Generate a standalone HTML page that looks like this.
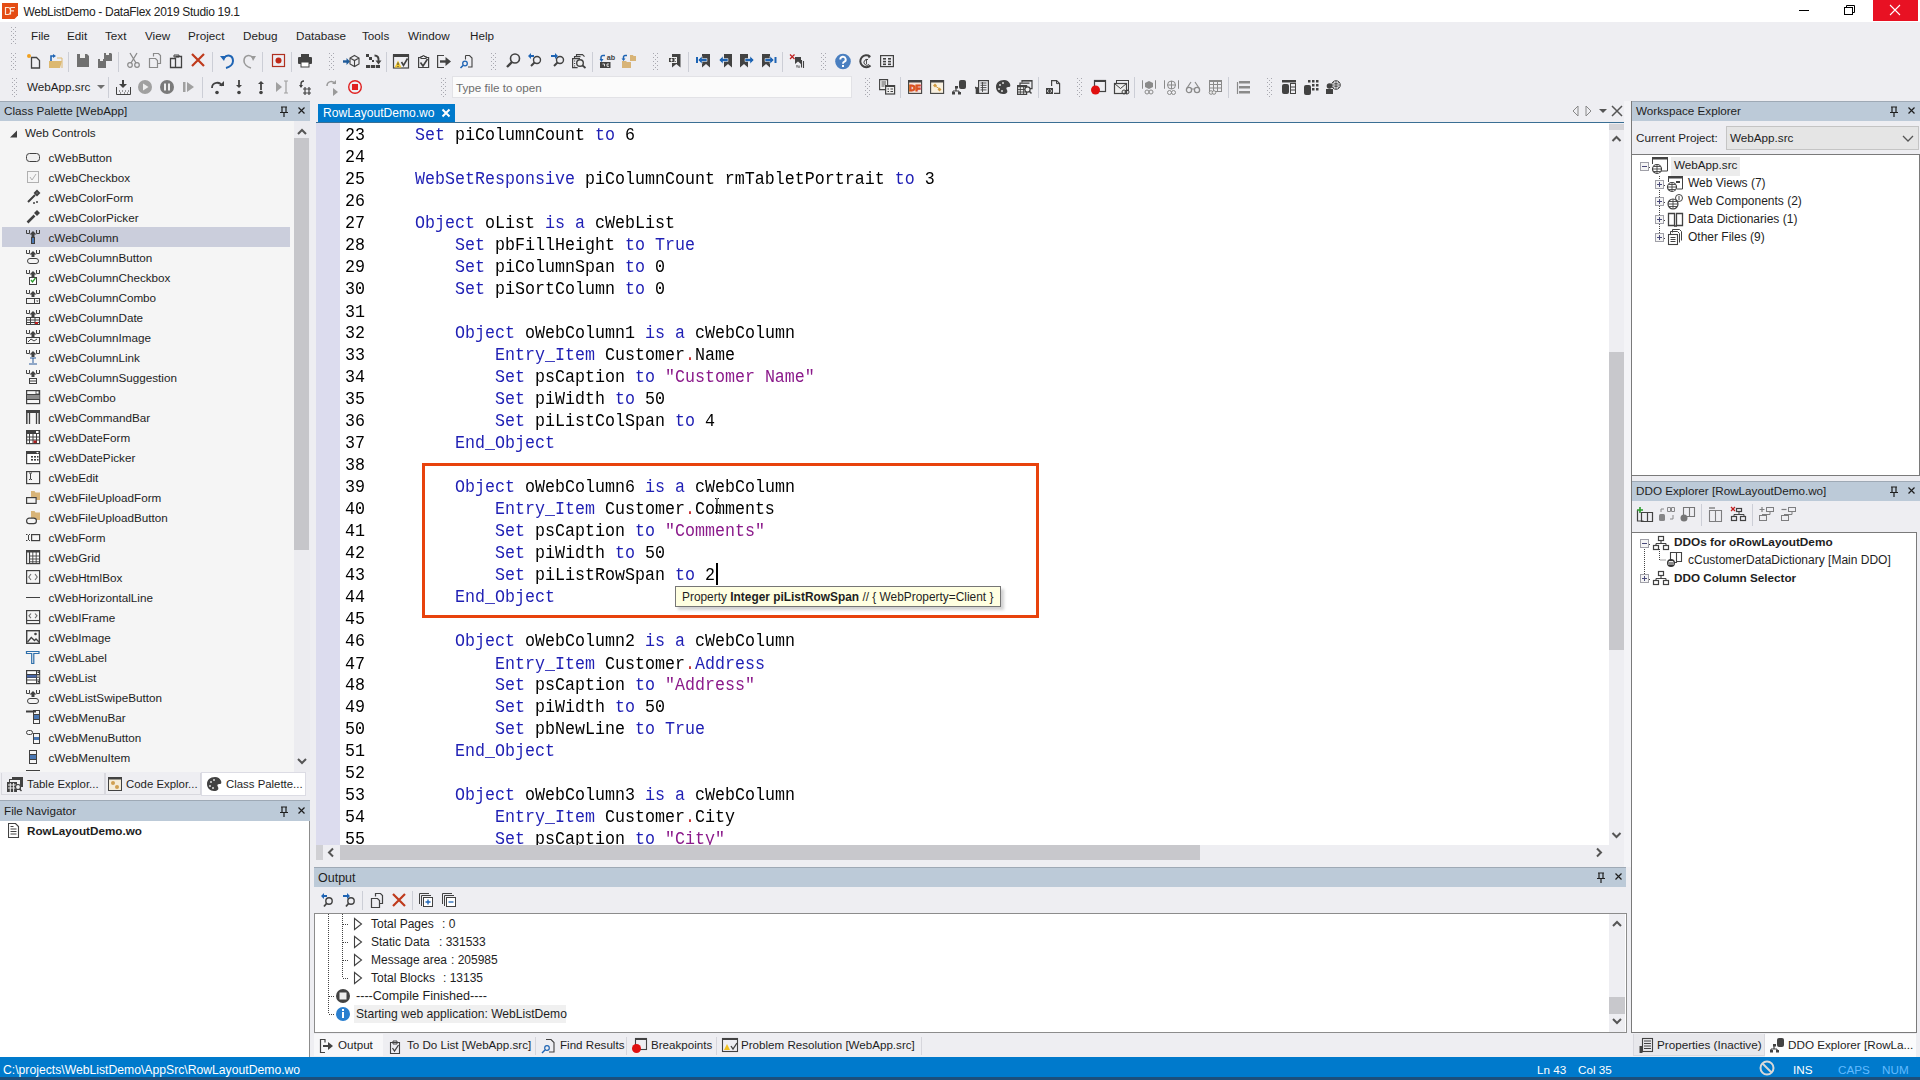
<!DOCTYPE html>
<html><head><meta charset="utf-8">
<style>
*{margin:0;padding:0;box-sizing:border-box}
html,body{width:1920px;height:1080px;overflow:hidden;background:#eeeef2;font-family:"Liberation Sans",sans-serif;font-size:11.7px;color:#1e1e1e;position:relative}
.a{position:absolute}
.t{position:absolute;white-space:pre;line-height:14px}
.hdr{position:absolute;background:#bccad8;border-top:1px solid #9ea9b5}
.code{position:absolute;font-family:"Liberation Mono",monospace;font-size:16.67px;white-space:pre;line-height:20.56px;color:#000;transform:scaleY(1.07);transform-origin:0 0}
.k{color:#1f1fb4}
.s{color:#8b1a8b}
.d{color:#c83232}
</style></head><body>

<!-- title bar -->
<div class="a" style="left:0;top:0;width:1920px;height:22px;background:#fff"></div>
<svg class="a" style="left:2px;top:3px" width="16" height="16"><path d="M0 0h16v12.5L12.5 16H0z" fill="#e44c14"/><path d="M3.5 4.5v7h2.5a2.5 3.5 0 0 0 0-7z M8.5 4.5h4.5M8.5 7.8h3.5M8.5 4.5v7" fill="none" stroke="#fbe8d8" stroke-width="1.2"/></svg>
<div class="t" style="left:23.5px;top:5px;font-size:12px;letter-spacing:-0.3px;color:#222">WebListDemo - DataFlex 2019 Studio 19.1</div>
<div class="a" style="left:1873px;top:0;width:45px;height:21px;background:#e81123"></div>

<!-- menu bar -->
<div class="t" style="left:31px;top:29px">File</div>
<div class="t" style="left:67px;top:29px">Edit</div>
<div class="t" style="left:105px;top:29px">Text</div>
<div class="t" style="left:145px;top:29px">View</div>
<div class="t" style="left:188px;top:29px">Project</div>
<div class="t" style="left:243px;top:29px">Debug</div>
<div class="t" style="left:296px;top:29px">Database</div>
<div class="t" style="left:362px;top:29px">Tools</div>
<div class="t" style="left:408px;top:29px">Window</div>
<div class="t" style="left:470px;top:29px">Help</div>

<!-- TOOLBARS -->
<svg class="a" style="left:0;top:0" width="1400" height="101"><rect x="11" y="53" width="1" height="1" fill="#a8a8b0"/><rect x="15" y="53" width="1" height="1" fill="#a8a8b0"/><rect x="13" y="55" width="1" height="1" fill="#a8a8b0"/><rect x="11" y="57" width="1" height="1" fill="#a8a8b0"/><rect x="15" y="57" width="1" height="1" fill="#a8a8b0"/><rect x="13" y="59" width="1" height="1" fill="#a8a8b0"/><rect x="11" y="61" width="1" height="1" fill="#a8a8b0"/><rect x="15" y="61" width="1" height="1" fill="#a8a8b0"/><rect x="13" y="63" width="1" height="1" fill="#a8a8b0"/><rect x="11" y="65" width="1" height="1" fill="#a8a8b0"/><rect x="15" y="65" width="1" height="1" fill="#a8a8b0"/><rect x="13" y="67" width="1" height="1" fill="#a8a8b0"/><rect x="11" y="69" width="1" height="1" fill="#a8a8b0"/><rect x="15" y="69" width="1" height="1" fill="#a8a8b0"/><rect x="329" y="53" width="1" height="1" fill="#a8a8b0"/><rect x="333" y="53" width="1" height="1" fill="#a8a8b0"/><rect x="331" y="55" width="1" height="1" fill="#a8a8b0"/><rect x="329" y="57" width="1" height="1" fill="#a8a8b0"/><rect x="333" y="57" width="1" height="1" fill="#a8a8b0"/><rect x="331" y="59" width="1" height="1" fill="#a8a8b0"/><rect x="329" y="61" width="1" height="1" fill="#a8a8b0"/><rect x="333" y="61" width="1" height="1" fill="#a8a8b0"/><rect x="331" y="63" width="1" height="1" fill="#a8a8b0"/><rect x="329" y="65" width="1" height="1" fill="#a8a8b0"/><rect x="333" y="65" width="1" height="1" fill="#a8a8b0"/><rect x="331" y="67" width="1" height="1" fill="#a8a8b0"/><rect x="329" y="69" width="1" height="1" fill="#a8a8b0"/><rect x="333" y="69" width="1" height="1" fill="#a8a8b0"/><rect x="491" y="53" width="1" height="1" fill="#a8a8b0"/><rect x="495" y="53" width="1" height="1" fill="#a8a8b0"/><rect x="493" y="55" width="1" height="1" fill="#a8a8b0"/><rect x="491" y="57" width="1" height="1" fill="#a8a8b0"/><rect x="495" y="57" width="1" height="1" fill="#a8a8b0"/><rect x="493" y="59" width="1" height="1" fill="#a8a8b0"/><rect x="491" y="61" width="1" height="1" fill="#a8a8b0"/><rect x="495" y="61" width="1" height="1" fill="#a8a8b0"/><rect x="493" y="63" width="1" height="1" fill="#a8a8b0"/><rect x="491" y="65" width="1" height="1" fill="#a8a8b0"/><rect x="495" y="65" width="1" height="1" fill="#a8a8b0"/><rect x="493" y="67" width="1" height="1" fill="#a8a8b0"/><rect x="491" y="69" width="1" height="1" fill="#a8a8b0"/><rect x="495" y="69" width="1" height="1" fill="#a8a8b0"/><rect x="653" y="53" width="1" height="1" fill="#a8a8b0"/><rect x="657" y="53" width="1" height="1" fill="#a8a8b0"/><rect x="655" y="55" width="1" height="1" fill="#a8a8b0"/><rect x="653" y="57" width="1" height="1" fill="#a8a8b0"/><rect x="657" y="57" width="1" height="1" fill="#a8a8b0"/><rect x="655" y="59" width="1" height="1" fill="#a8a8b0"/><rect x="653" y="61" width="1" height="1" fill="#a8a8b0"/><rect x="657" y="61" width="1" height="1" fill="#a8a8b0"/><rect x="655" y="63" width="1" height="1" fill="#a8a8b0"/><rect x="653" y="65" width="1" height="1" fill="#a8a8b0"/><rect x="657" y="65" width="1" height="1" fill="#a8a8b0"/><rect x="655" y="67" width="1" height="1" fill="#a8a8b0"/><rect x="653" y="69" width="1" height="1" fill="#a8a8b0"/><rect x="657" y="69" width="1" height="1" fill="#a8a8b0"/><rect x="821" y="53" width="1" height="1" fill="#a8a8b0"/><rect x="825" y="53" width="1" height="1" fill="#a8a8b0"/><rect x="823" y="55" width="1" height="1" fill="#a8a8b0"/><rect x="821" y="57" width="1" height="1" fill="#a8a8b0"/><rect x="825" y="57" width="1" height="1" fill="#a8a8b0"/><rect x="823" y="59" width="1" height="1" fill="#a8a8b0"/><rect x="821" y="61" width="1" height="1" fill="#a8a8b0"/><rect x="825" y="61" width="1" height="1" fill="#a8a8b0"/><rect x="823" y="63" width="1" height="1" fill="#a8a8b0"/><rect x="821" y="65" width="1" height="1" fill="#a8a8b0"/><rect x="825" y="65" width="1" height="1" fill="#a8a8b0"/><rect x="823" y="67" width="1" height="1" fill="#a8a8b0"/><rect x="821" y="69" width="1" height="1" fill="#a8a8b0"/><rect x="825" y="69" width="1" height="1" fill="#a8a8b0"/><rect x="11" y="27" width="1" height="1" fill="#a8a8b0"/><rect x="15" y="27" width="1" height="1" fill="#a8a8b0"/><rect x="13" y="29" width="1" height="1" fill="#a8a8b0"/><rect x="11" y="31" width="1" height="1" fill="#a8a8b0"/><rect x="15" y="31" width="1" height="1" fill="#a8a8b0"/><rect x="13" y="33" width="1" height="1" fill="#a8a8b0"/><rect x="11" y="35" width="1" height="1" fill="#a8a8b0"/><rect x="15" y="35" width="1" height="1" fill="#a8a8b0"/><rect x="13" y="37" width="1" height="1" fill="#a8a8b0"/><rect x="11" y="39" width="1" height="1" fill="#a8a8b0"/><rect x="15" y="39" width="1" height="1" fill="#a8a8b0"/><rect x="13" y="41" width="1" height="1" fill="#a8a8b0"/><rect x="11" y="43" width="1" height="1" fill="#a8a8b0"/><rect x="15" y="43" width="1" height="1" fill="#a8a8b0"/><rect x="68" y="52" width="1" height="20" fill="#ccced6"/><rect x="118" y="52" width="1" height="20" fill="#ccced6"/><rect x="212" y="52" width="1" height="20" fill="#ccced6"/><rect x="262" y="52" width="1" height="20" fill="#ccced6"/><rect x="291" y="52" width="1" height="20" fill="#ccced6"/><rect x="386" y="52" width="1" height="20" fill="#ccced6"/><rect x="592" y="52" width="1" height="20" fill="#ccced6"/><rect x="688" y="52" width="1" height="20" fill="#ccced6"/><rect x="782" y="52" width="1" height="20" fill="#ccced6"/><rect x="12" y="78" width="1" height="1" fill="#a8a8b0"/><rect x="16" y="78" width="1" height="1" fill="#a8a8b0"/><rect x="14" y="80" width="1" height="1" fill="#a8a8b0"/><rect x="12" y="82" width="1" height="1" fill="#a8a8b0"/><rect x="16" y="82" width="1" height="1" fill="#a8a8b0"/><rect x="14" y="84" width="1" height="1" fill="#a8a8b0"/><rect x="12" y="86" width="1" height="1" fill="#a8a8b0"/><rect x="16" y="86" width="1" height="1" fill="#a8a8b0"/><rect x="14" y="88" width="1" height="1" fill="#a8a8b0"/><rect x="12" y="90" width="1" height="1" fill="#a8a8b0"/><rect x="16" y="90" width="1" height="1" fill="#a8a8b0"/><rect x="14" y="92" width="1" height="1" fill="#a8a8b0"/><rect x="12" y="94" width="1" height="1" fill="#a8a8b0"/><rect x="16" y="94" width="1" height="1" fill="#a8a8b0"/><rect x="14" y="96" width="1" height="1" fill="#a8a8b0"/><rect x="441" y="78" width="1" height="1" fill="#a8a8b0"/><rect x="445" y="78" width="1" height="1" fill="#a8a8b0"/><rect x="443" y="80" width="1" height="1" fill="#a8a8b0"/><rect x="441" y="82" width="1" height="1" fill="#a8a8b0"/><rect x="445" y="82" width="1" height="1" fill="#a8a8b0"/><rect x="443" y="84" width="1" height="1" fill="#a8a8b0"/><rect x="441" y="86" width="1" height="1" fill="#a8a8b0"/><rect x="445" y="86" width="1" height="1" fill="#a8a8b0"/><rect x="443" y="88" width="1" height="1" fill="#a8a8b0"/><rect x="441" y="90" width="1" height="1" fill="#a8a8b0"/><rect x="445" y="90" width="1" height="1" fill="#a8a8b0"/><rect x="443" y="92" width="1" height="1" fill="#a8a8b0"/><rect x="441" y="94" width="1" height="1" fill="#a8a8b0"/><rect x="445" y="94" width="1" height="1" fill="#a8a8b0"/><rect x="443" y="96" width="1" height="1" fill="#a8a8b0"/><rect x="865" y="78" width="1" height="1" fill="#a8a8b0"/><rect x="869" y="78" width="1" height="1" fill="#a8a8b0"/><rect x="867" y="80" width="1" height="1" fill="#a8a8b0"/><rect x="865" y="82" width="1" height="1" fill="#a8a8b0"/><rect x="869" y="82" width="1" height="1" fill="#a8a8b0"/><rect x="867" y="84" width="1" height="1" fill="#a8a8b0"/><rect x="865" y="86" width="1" height="1" fill="#a8a8b0"/><rect x="869" y="86" width="1" height="1" fill="#a8a8b0"/><rect x="867" y="88" width="1" height="1" fill="#a8a8b0"/><rect x="865" y="90" width="1" height="1" fill="#a8a8b0"/><rect x="869" y="90" width="1" height="1" fill="#a8a8b0"/><rect x="867" y="92" width="1" height="1" fill="#a8a8b0"/><rect x="865" y="94" width="1" height="1" fill="#a8a8b0"/><rect x="869" y="94" width="1" height="1" fill="#a8a8b0"/><rect x="867" y="96" width="1" height="1" fill="#a8a8b0"/><rect x="1077" y="78" width="1" height="1" fill="#a8a8b0"/><rect x="1081" y="78" width="1" height="1" fill="#a8a8b0"/><rect x="1079" y="80" width="1" height="1" fill="#a8a8b0"/><rect x="1077" y="82" width="1" height="1" fill="#a8a8b0"/><rect x="1081" y="82" width="1" height="1" fill="#a8a8b0"/><rect x="1079" y="84" width="1" height="1" fill="#a8a8b0"/><rect x="1077" y="86" width="1" height="1" fill="#a8a8b0"/><rect x="1081" y="86" width="1" height="1" fill="#a8a8b0"/><rect x="1079" y="88" width="1" height="1" fill="#a8a8b0"/><rect x="1077" y="90" width="1" height="1" fill="#a8a8b0"/><rect x="1081" y="90" width="1" height="1" fill="#a8a8b0"/><rect x="1079" y="92" width="1" height="1" fill="#a8a8b0"/><rect x="1077" y="94" width="1" height="1" fill="#a8a8b0"/><rect x="1081" y="94" width="1" height="1" fill="#a8a8b0"/><rect x="1079" y="96" width="1" height="1" fill="#a8a8b0"/><rect x="1267" y="78" width="1" height="1" fill="#a8a8b0"/><rect x="1271" y="78" width="1" height="1" fill="#a8a8b0"/><rect x="1269" y="80" width="1" height="1" fill="#a8a8b0"/><rect x="1267" y="82" width="1" height="1" fill="#a8a8b0"/><rect x="1271" y="82" width="1" height="1" fill="#a8a8b0"/><rect x="1269" y="84" width="1" height="1" fill="#a8a8b0"/><rect x="1267" y="86" width="1" height="1" fill="#a8a8b0"/><rect x="1271" y="86" width="1" height="1" fill="#a8a8b0"/><rect x="1269" y="88" width="1" height="1" fill="#a8a8b0"/><rect x="1267" y="90" width="1" height="1" fill="#a8a8b0"/><rect x="1271" y="90" width="1" height="1" fill="#a8a8b0"/><rect x="1269" y="92" width="1" height="1" fill="#a8a8b0"/><rect x="1267" y="94" width="1" height="1" fill="#a8a8b0"/><rect x="1271" y="94" width="1" height="1" fill="#a8a8b0"/><rect x="1269" y="96" width="1" height="1" fill="#a8a8b0"/><rect x="108" y="77" width="1" height="21" fill="#ccced6"/><rect x="202" y="77" width="1" height="21" fill="#ccced6"/><rect x="900" y="77" width="1" height="21" fill="#ccced6"/><rect x="1038" y="77" width="1" height="21" fill="#ccced6"/><rect x="1134" y="77" width="1" height="21" fill="#ccced6"/><rect x="1228" y="77" width="1" height="21" fill="#ccced6"/><g transform="translate(26,53)"><path d="M5.5 4.5h5l3 3v7.5h-8z" fill="none" stroke="#424242" stroke-width="1.3"/><circle cx="3" cy="3" r="2" fill="#f0a020"/></g><g transform="translate(48,53)"><path d="M1 8h13l-2 7H1z" fill="#dcb870"/><path d="M3 8V3h3" stroke="#1e64b4" stroke-width="1.6" fill="none"/><path d="M5 1l3 2-3 2z" fill="#1e64b4"/><path d="M9 5h5v10" stroke="#dcb870" fill="none"/></g><g transform="translate(77,54)"><path d="M0 0h10l2 2v11H0z" fill="#707070"/><rect x="3" y="0" width="5" height="4" fill="#eee"/></g><g transform="translate(98,53)"><path d="M6 0h7l1 1v7H6z" fill="#707070"/><path d="M0 6h7l1 1v8H0z" fill="#707070"/><rect x="2" y="6" width="3" height="2" fill="#eee"/><rect x="8" y="0" width="3" height="2" fill="#eee"/></g><g transform="translate(127,53)"><path d="M3 0l6 10M10 0L4 10" stroke="#8a8a8a" stroke-width="1.3" fill="none"/><circle cx="3" cy="12" r="2.3" fill="none" stroke="#8a8a8a" stroke-width="1.2"/><circle cx="10" cy="12" r="2.3" fill="none" stroke="#8a8a8a" stroke-width="1.2"/></g><g transform="translate(149,53)"><path d="M4.5 3.5v-3h5l2 2v8h-3" fill="none" stroke="#8a8a8a" stroke-width="1.2"/><path d="M0.5 5.5h6l2 2v7h-8z" fill="none" stroke="#8a8a8a" stroke-width="1.2"/></g><g transform="translate(170,53)"><path d="M0.5 5.5h5v9h-5zM5.5 3.5h6v11h-6" fill="none" stroke="#424242" stroke-width="1.3"/><path d="M4 2h5v2H4z" fill="none" stroke="#424242"/></g><g transform="translate(191,53)"><path d="M1 1l12 12M13 1L1 13" stroke="#bf3a1c" stroke-width="2.2"/></g><g transform="translate(220,53)"><path d="M4 5c3-4 9-3 9 3 0 3-3 6-7 7" fill="none" stroke="#1e64b4" stroke-width="2"/><path d="M0 3l6 0-2 5z" fill="#1e64b4"/></g><g transform="translate(243,53)"><path d="M10 5c-3-4-9-3-9 3 0 3 3 6 7 7" fill="none" stroke="#9a9a9a" stroke-width="1.6"/><path d="M13 3h-5l2 5z" fill="#9a9a9a"/></g><g transform="translate(272,54)"><rect x="0.5" y="0.5" width="12" height="12" fill="none" stroke="#b03020" stroke-width="1.2"/><circle cx="6.5" cy="6.5" r="3" fill="#c02818"/></g><g transform="translate(298,54)"><rect x="3" y="0" width="8" height="3" fill="#424242"/><rect x="0" y="3" width="14" height="7" rx="1" fill="#424242"/><rect x="3" y="8" width="8" height="5" fill="#fff" stroke="#424242"/></g><g transform="translate(342,54)"><path d="M1 7.5h4" stroke="#1e5a9a" stroke-width="2.4"/><path d="M4.5 4l3.5 3.5-3.5 3.5z" fill="#1e5a9a"/><path d="M12.5 1.5l4.5 2.5v6l-4.5 2.5-4.5-2.5V4z M8 4l4.5 2.5L17 4M12.5 6.5v6" fill="none" stroke="#424242" stroke-width="1.1"/></g><g transform="translate(366,54)"><path d="M0 0h3v3H0zM3 3h3v3H3zM6 6h2v2H6z" fill="#424242"/><path d="M8.5 1.5c3 0 4.5 2 4 5.5" fill="none" stroke="#424242" stroke-width="2"/><path d="M9.5 6.5l3 4 3-4z" fill="#424242"/><rect x="0" y="11" width="14" height="3" fill="#424242"/><path d="M4.5 11v3M9.5 11v3" stroke="#eee" stroke-width="0.8"/></g><g transform="translate(393,54)"><rect x="0.5" y="1" width="15" height="13" fill="none" stroke="#424242" stroke-width="1.2"/><rect x="0" y="0" width="16" height="3" fill="#424242"/><path d="M1.5 13.5l3.5-7 3.5 7z" fill="#f0c830"/><path d="M5 8.5v2.5M5 12v1" stroke="#333" stroke-width="1"/><path d="M8.5 8l2 3.5 4-7" stroke="#424242" stroke-width="1.6" fill="none"/></g><g transform="translate(418,54)"><path d="M3 3.5H0.6v10h10v-10H8" fill="none" stroke="#424242" stroke-width="1.2"/><path d="M3 4.5V2.5h1.5a1 1 0 0 1 2 0H8v2z" fill="none" stroke="#424242" stroke-width="1.1"/><path d="M2.5 8.5l2.5 3.5 4.5-7" stroke="#424242" stroke-width="1.6" fill="none"/></g><g transform="translate(437,54)"><path d="M7 1.5H0.6v12H7" fill="none" stroke="#424242" stroke-width="1.2"/><path d="M3 7.5h6" stroke="#424242" stroke-width="2.4"/><path d="M8.5 3l5.5 4.5-5.5 4.5z" fill="#424242"/></g><g transform="translate(460,54)"><path d="M5.5 1.5h4l2.5 2.5v9H8" fill="none" stroke="#424242" stroke-width="1.1"/><path d="M5.5 1.5v4" stroke="#424242" stroke-width="1.1"/><circle cx="5" cy="9.5" r="2.3" fill="none" stroke="#1e64b4" stroke-width="1.3"/><path d="M3.3 11.2L0.5 14" stroke="#1e64b4" stroke-width="1.6"/></g><g transform="translate(506,53)"><circle cx="9" cy="5.5" r="4.5" fill="none" stroke="#424242" stroke-width="1.6"/><path d="M6 9l-5 5" stroke="#424242" stroke-width="2.4"/></g><g transform="translate(528,53)"><circle cx="9" cy="7" r="3.5" fill="none" stroke="#424242" stroke-width="1.4"/><path d="M6.5 9.5L3 13" stroke="#424242" stroke-width="2"/><path d="M0 3l3-3v2h3v2H3v2z" fill="#1e64b4"/></g><g transform="translate(551,53)"><circle cx="9" cy="7" r="3.5" fill="none" stroke="#424242" stroke-width="1.4"/><path d="M6.5 9.5L3 13" stroke="#424242" stroke-width="2"/><path d="M7 3L4 0v2H0v2h4v2z" fill="#1e64b4"/></g><g transform="translate(572,54)"><path d="M4.5 2.5V0.6h6l2 2" fill="none" stroke="#424242" stroke-width="1.1"/><path d="M2.5 4.5V2.6h6" fill="none" stroke="#424242" stroke-width="1.1"/><path d="M8 4.6H0.6v9h5" fill="none" stroke="#424242" stroke-width="1.2"/><path d="M2 7h1.2M2 9.5h1.2M2 12h1.2" stroke="#424242"/><circle cx="8" cy="9" r="3.3" fill="#eee" stroke="#424242" stroke-width="1.4"/><path d="M10.3 11.3L13.5 14" stroke="#424242" stroke-width="1.8"/></g><g transform="translate(600,54)"><path d="M5 1.5H3a2 2 0 0 0-2 2V6" fill="none" stroke="#1e64b4" stroke-width="1.5"/><path d="M-0.5 5l2 3 2-3z" fill="#1e64b4"/><text x="6.8" y="5.8" font-size="7.2" font-family="Liberation Sans" font-weight="bold" fill="#424242">ab</text><rect x="0" y="8" width="10.5" height="6" fill="#424242"/><path d="M2.5 10h2v2.3M7 10h2M7 10v2.3h2" stroke="#eee" stroke-width="0.9" fill="none"/></g><g transform="translate(622,54)"><path d="M8 1h3l.5 1H14v5H8z" fill="#d8b478"/><path d="M0 7h4l1 1h4v6H0z" fill="#d8b478"/><path d="M5 1.5H3a1.5 1.5 0 0 0-1.5 1.5V5" fill="none" stroke="#1e64b4" stroke-width="1.5"/><path d="M-0.5 4.5l2 2.5 2-2.5z" fill="#1e64b4"/></g><g transform="translate(668,54)"><path d="M4 0h8.5v13.5l-4.2-3.5-4.3 3.5z" fill="#424242"/><rect x="0.5" y="3.5" width="8" height="5" fill="#424242" stroke="#eee" stroke-width="1"/><path d="M2 6h3M3.5 4.5v3M6 5h1.5v2H6" stroke="#fff" stroke-width="0.9" fill="none"/></g><g transform="translate(696,54)"><path d="M6 0h8v13.5l-4-3.5-4 3.5z" fill="#424242"/><rect x="0" y="3" width="2" height="6" fill="#1e64b4"/><path d="M2 6l4-4v2.5h5v3H6V10z" fill="#1e64b4" stroke="#eee" stroke-width="0.6"/></g><g transform="translate(719,54)"><path d="M5 0h8v13.5l-4-3.5-4 3.5z" fill="#424242"/><path d="M0 6l4-4v2.5h5v3H4V10z" fill="#1e64b4" stroke="#eee" stroke-width="0.6"/></g><g transform="translate(740,54)"><path d="M0 0h8v13.5l-4-3.5-4 3.5z" fill="#424242"/><path d="M14 6l-4-4v2.5H5v3h5V10z" fill="#1e64b4" stroke="#eee" stroke-width="0.6"/></g><g transform="translate(762,54)"><path d="M0 0h8v13.5l-4-3.5-4 3.5z" fill="#424242"/><path d="M12 6l-4-4v2.5H3v3h5V10z" fill="#1e64b4" stroke="#eee" stroke-width="0.6"/><rect x="12.5" y="3" width="2" height="6" fill="#1e64b4"/></g><g transform="translate(789,54)"><path d="M1 0.5l4.5 4.5M5.5 0.5L1 5" stroke="#c02020" stroke-width="1.2"/><path d="M6 3h6v7l-3-2.5-3 2.5z" fill="#424242"/><path d="M12.5 6v7.5M14.5 7v7" stroke="#424242" stroke-width="1.1"/><path d="M8 11v2.5M10 11.5v2.5" stroke="#424242" stroke-width="1"/></g><g transform="translate(835,54)"><circle cx="8" cy="7.5" r="7.8" fill="#4a7fc0"/><path d="M5.3 5.5a2.7 2.7 0 1 1 3.8 2.4c-.9.4-1.1.9-1.1 1.8" fill="none" stroke="#fff" stroke-width="1.9"/><rect x="7" y="11" width="2" height="2" fill="#fff"/></g><g transform="translate(859,54)"><path d="M11 2.5a6 6 0 1 0 .5 9" fill="none" stroke="#424242" stroke-width="2"/><path d="M9 5.5a3 3 0 1 0 1 5" fill="none" stroke="#424242" stroke-width="1"/><path d="M6.5 6.5l1-0.8V10" stroke="#424242" stroke-width="0.9" fill="none"/><path d="M9 1l3 1.5-2.5 2z" fill="#424242"/></g><g transform="translate(880,55)"><rect x="0.6" y="0.6" width="12.8" height="11" fill="none" stroke="#424242" stroke-width="1.2"/><g fill="#424242"><rect x="3" y="3" width="3" height="1.6"/><rect x="8" y="3" width="3" height="1.6"/><rect x="3" y="5.8" width="3" height="1.6"/><rect x="8" y="5.8" width="3" height="1.6"/><rect x="3" y="8.5" width="3" height="1.6"/><rect x="8" y="8.5" width="3" height="1.6"/></g></g><g transform="translate(116,80)"><path d="M7 0v6" stroke="#424242" stroke-width="2"/><path d="M3 4l4 4 4-4z" fill="#424242"/><path d="M0.5 7v7.5h14V7" fill="none" stroke="#424242"/><path d="M3 11h1M6 11h1M9 11h1M12 11h1M4 13h1M8 13h1M11 13h1" stroke="#424242"/></g><g transform="translate(138,80)"><circle cx="7" cy="7" r="7" fill="#a0a0a0"/><path d="M5 3.5l5.5 3.5L5 10.5z" fill="#eee"/></g><g transform="translate(160,80)"><circle cx="7" cy="7" r="7" fill="#7a7a7a"/><rect x="4" y="3.5" width="2" height="7" fill="#eee"/><rect x="8" y="3.5" width="2" height="7" fill="#eee"/></g><g transform="translate(183,80)"><rect x="0" y="2" width="2.5" height="10" fill="#a0a0a0"/><path d="M4 2l7 5-7 5z" fill="#a0a0a0"/></g><g transform="translate(210,80)"><path d="M2 8c0-6 8-7 10-2" fill="none" stroke="#424242" stroke-width="1.8"/><path d="M9 6h5V1z" fill="#424242"/><circle cx="7" cy="12.5" r="1.8" fill="#424242"/></g><g transform="translate(233,80)"><path d="M6 0v7" stroke="#424242" stroke-width="1.8"/><path d="M3 5l3 3 3-3z" fill="#424242"/><circle cx="6" cy="12.5" r="1.8" fill="#424242"/></g><g transform="translate(255,80)"><path d="M6 3v7" stroke="#424242" stroke-width="1.8"/><path d="M3 4l3-3 3 3z" fill="#424242"/><circle cx="6" cy="12.5" r="1.8" fill="#424242"/></g><g transform="translate(276,80)"><path d="M0 2l6 5-6 5z" fill="#a0a0a0"/><path d="M8 1h4M10 1v12M8 13h4" stroke="#a0a0a0" stroke-width="1.2"/></g><g transform="translate(298,80)"><path d="M6 1a3 3 0 0 0-3 3v3" fill="none" stroke="#424242" stroke-width="1.4"/><path d="M1 5l2 3 2-3z" fill="#424242"/><path d="M7 7v8M11 7v8M5 9h8M5 13h8" stroke="#424242" stroke-width="1.2"/></g><g transform="translate(326,80)"><path d="M1 6c0-5 6-6 8-2" fill="none" stroke="#9a9a9a" stroke-width="1.5"/><path d="M6 4h4V0z" fill="#9a9a9a"/><path d="M7 8l5 4-5 4z" fill="#9a9a9a"/></g><g transform="translate(348,80)"><circle cx="7" cy="7" r="6.3" fill="none" stroke="#e02020" stroke-width="1.4"/><rect x="4" y="4" width="6" height="6" fill="#e02020"/></g><g transform="translate(879,79)"><path d="M0.6 0.6h8v10h-8z" fill="#eee" stroke="#424242" stroke-width="1.1"/><path d="M2.5 3h4.5M2.5 5h4.5M2.5 7h3" stroke="#424242" stroke-width="0.9"/><rect x="6.6" y="6.6" width="9" height="8.4" fill="#eee" stroke="#424242" stroke-width="1.2"/><rect x="6" y="6" width="10" height="2" fill="#424242"/><path d="M8.5 10h1.5M11.5 10h2.5M8.5 12.5h1.5M11.5 12.5h2.5" stroke="#424242" stroke-width="1.2"/></g><g transform="translate(908,80)"><rect x="0.6" y="0.6" width="13" height="12.8" fill="#f6e6dc" stroke="#424242" stroke-width="1.1"/><rect x="0" y="0" width="14" height="2.5" fill="#424242"/><text x="1.3" y="11.3" font-size="8.5" font-weight="bold" font-family="Liberation Sans" fill="none" stroke="#d8501c" stroke-width="1.1">DF</text></g><g transform="translate(930,80)"><rect x="0.6" y="0.6" width="13" height="12.8" fill="#f8f0e0" stroke="#424242" stroke-width="1.1"/><rect x="0" y="0" width="14" height="2.5" fill="#424242"/><path d="M5 3.5l2 2-2 2-2-2z" fill="#d09a40"/><path d="M9.5 7.5l2 2-2 2-2-2z" fill="#d09a40"/><path d="M6 6.5l3 2" stroke="#d09a40"/></g><g transform="translate(952,80)"><rect x="7" y="0" width="7" height="9" rx="2" fill="#424242"/><path d="M4 8v3M1 11h6M1 11v2M7 11v2" stroke="#424242" stroke-width="1.2" fill="none"/><rect x="3" y="6" width="3" height="2.5" fill="#424242"/><rect x="0" y="12" width="3" height="2.5" fill="#424242"/><rect x="6" y="12" width="3" height="2.5" fill="#424242"/></g><g transform="translate(975,80)"><rect x="3.6" y="0.6" width="9.8" height="12.8" fill="none" stroke="#424242" stroke-width="1.2"/><path d="M5.5 3h6M5.5 5.3h6M5.5 7.6h6M5.5 9.9h6M7.5 2v10" stroke="#424242" stroke-width="0.9"/><path d="M2 8v6" stroke="#424242" stroke-width="2.6"/><path d="M0.5 8.5V7l1.5 1 1.5-1v1.5" stroke="#424242" fill="none"/></g><g transform="translate(996,80)"><path d="M8 0C3 0 0 3 0 7s3 7 7 7 5-2 4-4-1-3 2-3 1-7-5-7z" fill="#424242"/><circle cx="4" cy="5" r="1" fill="#ddd"/><circle cx="7" cy="3" r="1" fill="#ddd"/><circle cx="3" cy="9" r="1" fill="#ddd"/><circle cx="6" cy="11" r="1" fill="#ddd"/></g><g transform="translate(1017,80)"><path d="M5 2.5V0.6h10v8H13" fill="none" stroke="#424242" stroke-width="1.2"/><rect x="5" y="0" width="10" height="1.5" fill="#424242"/><path d="M3 5V3.1h9.5" fill="none" stroke="#424242" stroke-width="1.2"/><rect x="0.6" y="5.6" width="9" height="8.8" fill="#eee" stroke="#424242" stroke-width="1.2"/><rect x="0" y="5" width="10" height="2.2" fill="#424242"/><path d="M0 9.5h10M0 12h10M3.3 7v7M6.6 7v7" stroke="#424242" stroke-width="0.9"/><circle cx="10.5" cy="9.5" r="2.6" fill="#eee" stroke="#424242" stroke-width="1.2"/><path d="M12.3 11.3l2.2 2.2" stroke="#424242" stroke-width="1.5"/></g><g transform="translate(1046,80)"><path d="M5.6 6V0.6h5l3 3v9.8H8" fill="none" stroke="#424242" stroke-width="1.2"/><path d="M10.5 0.6v3h3" fill="none" stroke="#424242" stroke-width="1"/><rect x="0" y="8" width="7" height="6" fill="#424242"/><path d="M2.5 9.5l-1.2 1.5 1.2 1.5M4.5 9.5l1.2 1.5-1.2 1.5" stroke="#eee" stroke-width="0.9" fill="none"/></g><g transform="translate(1091,80)"><rect x="3.5" y="0.5" width="11" height="11" fill="none" stroke="#424242" stroke-width="1.2"/><rect x="3" y="0" width="12" height="2" fill="#424242"/><circle cx="4.5" cy="10" r="4.5" fill="#e01010"/></g><g transform="translate(1114,80)"><rect x="2.5" y="0.5" width="12" height="10" fill="none" stroke="#424242"/><rect x="0.5" y="3.5" width="12" height="10" fill="#eee" stroke="#424242" stroke-width="1.2"/><path d="M0.5 3.5l6 5 6-5" fill="none" stroke="#424242"/><circle cx="10" cy="12" r="2" fill="none" stroke="#424242"/><circle cx="13" cy="12" r="2" fill="none" stroke="#424242"/></g><g transform="translate(1142,80)"><path d="M1 0.5H0.5v8H1M13 0.5h.5v8H13" stroke="#8a8a8a" fill="none"/><path d="M7 1l4 2v4l-4 2-4-2V3z" fill="#8a8a8a"/><circle cx="5" cy="12" r="2" fill="none" stroke="#8a8a8a"/><circle cx="9" cy="12" r="2" fill="none" stroke="#8a8a8a"/></g><g transform="translate(1164,80)"><path d="M1 0.5H0.5v8H1M14 0.5h.5v8H14" stroke="#8a8a8a" fill="none"/><circle cx="7.5" cy="5" r="4" fill="none" stroke="#8a8a8a"/><path d="M3.5 5h8M7.5 1v8" stroke="#8a8a8a"/><circle cx="5.5" cy="12.5" r="2" fill="none" stroke="#8a8a8a"/><circle cx="9.5" cy="12.5" r="2" fill="none" stroke="#8a8a8a"/></g><g transform="translate(1186,80)"><circle cx="3" cy="10" r="2.6" fill="none" stroke="#8a8a8a" stroke-width="1.3"/><circle cx="11" cy="10" r="2.6" fill="none" stroke="#8a8a8a" stroke-width="1.3"/><path d="M5.5 9h3M1 8l4-6M13 8L9 2" stroke="#8a8a8a" stroke-width="1.2" fill="none"/></g><g transform="translate(1208,80)"><rect x="1.5" y="0.5" width="12" height="11" fill="none" stroke="#8a8a8a"/><rect x="1" y="0" width="13" height="2" fill="#8a8a8a"/><path d="M1 4.5h13M1 8h13M5.5 1v11M9.5 1v11" stroke="#8a8a8a"/><circle cx="3" cy="12.5" r="1.8" fill="#eee" stroke="#8a8a8a"/><circle cx="6" cy="12.5" r="1.8" fill="#eee" stroke="#8a8a8a"/></g><g transform="translate(1236,81)"><rect x="3" y="0" width="11" height="2.5" fill="#8a8a8a"/><rect x="3" y="5" width="11" height="2.5" fill="#8a8a8a"/><rect x="3" y="10" width="11" height="2.5" fill="#8a8a8a"/><path d="M1.5 1v12" stroke="#8a8a8a" stroke-width="1.2"/></g><g transform="translate(1282,80)"><rect x="0" y="4" width="7" height="10" rx="2" fill="#424242"/><rect x="0" y="0" width="14" height="2.5" fill="#424242"/><rect x="8.5" y="3.5" width="5" height="10" fill="none" stroke="#424242"/><path d="M8 7h6M8 10h6" stroke="#424242"/></g><g transform="translate(1304,80)"><rect x="0" y="5" width="7" height="10" rx="2" fill="#424242"/><g fill="#424242"><rect x="4" y="0" width="2.5" height="2.5"/><rect x="8" y="0" width="2.5" height="2.5"/><rect x="12" y="0" width="2.5" height="2.5"/><rect x="8" y="4" width="2.5" height="2.5"/><rect x="12" y="4" width="2.5" height="2.5"/><rect x="8" y="8" width="2.5" height="2.5"/><rect x="12" y="8" width="2.5" height="2.5"/></g></g><g transform="translate(1326,80)"><circle cx="3.5" cy="6" r="2.8" fill="#424242"/><path d="M0 9h7v5H0z" fill="#424242"/><circle cx="10" cy="5" r="4.3" fill="none" stroke="#424242"/><path d="M6 5h8M10 1v8M7 2.5c2 1.5 4 1.5 6 0M7 7.5c2-1.5 4-1.5 6 0" stroke="#424242" fill="none" stroke-width="0.8"/></g><path d="M97 85h8l-4 4z" fill="#707070"/></svg>
<div class="t" style="left:27px;top:80px">WebApp.src</div>
<div class="a" style="left:452px;top:76px;width:400px;height:22px;background:#fbfbfb;border:1px solid #e2e2e6"></div>
<div class="t" style="left:456px;top:81px;color:#6d6d6d">Type file to open</div>


<!-- LEFT PANEL -->
<div class="hdr" style="left:0;top:101px;width:310px;height:20px"></div>
<div class="t" style="left:4px;top:104px">Class Palette [WebApp]</div>
<div class="a" style="left:0;top:121px;width:310px;height:651px;background:#f5f5f5"></div>
<div class="a" style="left:2px;top:227px;width:288px;height:20px;background:#cbcedc"></div>
<svg class="a" style="left:0;top:0" width="320" height="800"><g transform="translate(26,150)"><rect x="0.5" y="3.5" width="13" height="8" rx="3" fill="#f0f0f0" stroke="#404040"/></g><g transform="translate(26,170)"><rect x="1.5" y="1.5" width="11" height="11" fill="none" stroke="#b0b0b0"/><path d="M4 7l2 3 4-6" fill="none" stroke="#b0b0b0"/></g><g transform="translate(26,190)"><path d="M2 12l7-7M9 3l2-2 2 2-2 2z" stroke="#404040" stroke-width="2" fill="none"/><circle cx="11" cy="12" r="1" fill="#404040"/><circle cx="8" cy="13" r="1" fill="#404040"/></g><g transform="translate(26,210)"><path d="M1.5 12.5l7-7" stroke="#404040" stroke-width="2.5" fill="none"/><path d="M8 3l3-3 3 3-3 3z" fill="#404040"/></g><g transform="translate(26,230)"><path d="M0.5 0v3.5h3V0M10.5 0v3.5h3V0" fill="none" stroke="#404040" stroke-width="1"/><path d="M7 1l3.5 3.5H8.5V7h-3V4.5H3.5z" fill="#404040"/><rect x="5.5" y="7.5" width="3" height="6" fill="#4a78b4" stroke="#404040"/></g><g transform="translate(26,250)"><path d="M0.5 0v3.5h3V0M10.5 0v3.5h3V0" fill="none" stroke="#404040" stroke-width="1"/><path d="M7 1l3.5 3.5H8.5V7h-3V4.5H3.5z" fill="#404040"/><rect x="1.5" y="8.5" width="11" height="5" rx="2.5" fill="none" stroke="#404040"/></g><g transform="translate(26,270)"><path d="M0.5 0v3.5h3V0M10.5 0v3.5h3V0" fill="none" stroke="#404040" stroke-width="1"/><path d="M7 1l3.5 3.5H8.5V7h-3V4.5H3.5z" fill="#404040"/><rect x="3.5" y="7.5" width="7" height="7" fill="#fff" stroke="#404040"/><path d="M5 10l1.5 2 3-4" stroke="#2a9a2a" fill="none" stroke-width="1.3"/></g><g transform="translate(26,290)"><path d="M0.5 0v3.5h3V0M10.5 0v3.5h3V0" fill="none" stroke="#404040" stroke-width="1"/><path d="M7 1l3.5 3.5H8.5V7h-3V4.5H3.5z" fill="#404040"/><rect x="0.5" y="8.5" width="13" height="5" fill="none" stroke="#404040"/><path d="M8.5 8.5v5" stroke="#404040"/><path d="M10 10.5h2.5l-1.25 1.5z" fill="#404040"/></g><g transform="translate(26,310)"><path d="M0.5 0v3.5h3V0M10.5 0v3.5h3V0" fill="none" stroke="#404040" stroke-width="1"/><path d="M7 1l3.5 3.5H8.5V7h-3V4.5H3.5z" fill="#404040"/><rect x="0.5" y="7.5" width="13" height="7" fill="none" stroke="#404040"/><path d="M0 10h14M0 12.5h14M4.5 7v8M9 7v8" stroke="#404040"/><rect x="9" y="12" width="3" height="2" fill="#c02020"/></g><g transform="translate(26,330)"><path d="M0.5 0v3.5h3V0M10.5 0v3.5h3V0" fill="none" stroke="#404040" stroke-width="1"/><path d="M7 1l3.5 3.5H8.5V7h-3V4.5H3.5z" fill="#404040"/><rect x="0.5" y="7.5" width="13" height="6" fill="none" stroke="#404040"/><path d="M2 12l3-3 3 2 3-2" stroke="#404040" fill="none"/></g><g transform="translate(26,350)"><path d="M0.5 0v3.5h3V0M10.5 0v3.5h3V0" fill="none" stroke="#404040" stroke-width="1"/><path d="M7 1l3.5 3.5H8.5V7h-3V4.5H3.5z" fill="#404040"/><path d="M4 8h6M7 8v5M3 14h8" stroke="#2a5a9a" fill="none"/></g><g transform="translate(26,370)"><path d="M0.5 0v3.5h3V0M10.5 0v3.5h3V0" fill="none" stroke="#404040" stroke-width="1"/><path d="M7 1l3.5 3.5H8.5V7h-3V4.5H3.5z" fill="#404040"/><rect x="3.5" y="8.5" width="7" height="5" fill="none" stroke="#404040"/><path d="M3 11h8" stroke="#404040"/></g><g transform="translate(26,390)"><rect x="0.6" y="0.6" width="13" height="13" fill="none" stroke="#404040" stroke-width="1.2"/><path d="M0 4.5h14M0 9.5h14" stroke="#404040" stroke-width="1.1"/><rect x="1" y="5" width="12.5" height="4" fill="#8a8a8a"/><rect x="10" y="1" width="3" height="3" fill="#fff" stroke="#404040" stroke-width="0.8"/></g><g transform="translate(26,410)"><path d="M0.8 14V0.8h12.4V14" fill="none" stroke="#404040" stroke-width="1.5"/><rect x="0" y="0" width="14" height="3" fill="#404040"/><path d="M3.5 3v11M10.5 3v11" stroke="#404040" stroke-width="1.3"/></g><g transform="translate(26,430)"><rect x="0.6" y="0.6" width="13" height="13" fill="#fff" stroke="#404040" stroke-width="1.2"/><rect x="0" y="0" width="14" height="4" fill="#404040"/><rect x="10" y="1" width="2.5" height="2" fill="#fff"/><path d="M0 7h14M0 10h14M3.5 4v10M7 4v10M10.5 4v10" stroke="#404040" stroke-width="1"/><rect x="7.5" y="10.5" width="3" height="2.5" fill="#b02020"/></g><g transform="translate(26,450)"><rect x="0.6" y="1.6" width="13" height="12" fill="#fff" stroke="#404040" stroke-width="1.2"/><rect x="0" y="1" width="14" height="3" fill="#404040"/><path d="M10 2l1.5 1.5L13 2z" fill="#fff"/><g fill="#404040"><rect x="5" y="6" width="2" height="1.6"/><rect x="8" y="6" width="2" height="1.6"/><rect x="11" y="6" width="1.5" height="1.6"/><rect x="5" y="9" width="2" height="1.6"/><rect x="8" y="9" width="2" height="1.6"/><rect x="11" y="9" width="1.5" height="1.6"/></g></g><g transform="translate(26,470)"><rect x="0.6" y="1.6" width="13" height="12" fill="none" stroke="#404040" stroke-width="1.2"/><path d="M3 3h1.2M4.8 3H6M4.5 3.2v6M3 9.5h1.2M4.8 9.5H6" stroke="#404040" stroke-width="1"/></g><g transform="translate(26,490)"><path d="M5 1h3.5l1 1.5H14V10H5z" fill="#d8b478"/><rect x="0.6" y="7.6" width="9.5" height="5.8" fill="#f5f5f5" stroke="#404040" stroke-width="1.2"/></g><g transform="translate(26,510)"><path d="M5 1h3.5l1 1.5H14V10H5z" fill="#d8b478"/><rect x="0.6" y="8.1" width="9.8" height="5.5" rx="2.7" fill="#f5f5f5" stroke="#404040" stroke-width="1.2"/></g><g transform="translate(26,530)"><path d="M0 4.5h1.5M0 10.5h1.5M3 4.5h1M3 10.5h1M2.5 5v5" stroke="#404040" stroke-width="1"/><rect x="5.6" y="4.6" width="8" height="6" fill="none" stroke="#404040" stroke-width="1.2"/></g><g transform="translate(26,550)"><rect x="0.6" y="0.6" width="13" height="13" fill="#fff" stroke="#404040" stroke-width="1.2"/><rect x="0" y="0" width="14" height="2.5" fill="#404040"/><path d="M3.5 2v12" stroke="#404040" stroke-width="1.2"/><path d="M3 6h11M3 9h11M3 11.8h11M6.8 2v12M10.2 2v12" stroke="#404040" stroke-width="0.9"/></g><g transform="translate(26,570)"><rect x="0.6" y="0.6" width="13" height="12.8" fill="none" stroke="#404040" stroke-width="1.2"/><path d="M5 4l-2.2 3L5 10M9 4l2.2 3L9 10" stroke="#707070" stroke-width="1.1" fill="none"/></g><g transform="translate(26,590)"><path d="M0 7.5h14" stroke="#404040"/></g><g transform="translate(26,610)"><rect x="0.6" y="0.6" width="13" height="13" fill="none" stroke="#404040" stroke-width="1.2"/><path d="M0 10.5h14" stroke="#404040" stroke-width="1.1"/><path d="M5 3.5l-2 2.3 2 2.3M9 3.5l2 2.3-2 2.3" stroke="#707070" stroke-width="1.1" fill="none"/></g><g transform="translate(26,630)"><rect x="0.7" y="0.7" width="12.6" height="12.6" fill="none" stroke="#404040" stroke-width="1.4"/><path d="M1.5 12l3.8-4.5 3.2 3 1.5-1.5 3 3" fill="none" stroke="#404040" stroke-width="1.3"/><circle cx="9.5" cy="4" r="1.3" fill="#404040"/></g><g transform="translate(26,650)"><path d="M0.5 1.5h12.5v2h-5.2v10H5.7v-10H0.5z" fill="none" stroke="#2f6faa" stroke-width="1.2"/></g><g transform="translate(26,670)"><rect x="0.6" y="0.6" width="13" height="13" fill="#fff" stroke="#404040" stroke-width="1.2"/><path d="M0 4.5h14M0 7.5h14M0 10h14M10.5 0v14" stroke="#404040" stroke-width="1"/><rect x="1" y="5" width="9.5" height="2.5" fill="#4a68a8"/><rect x="11" y="5" width="2.5" height="2.5" fill="#aaa"/><rect x="11.5" y="1.5" width="1.5" height="1.5" fill="#404040"/><rect x="11.5" y="11" width="1.5" height="1.5" fill="#404040"/></g><g transform="translate(26,690)"><path d="M0.5 0v3.5h3V0M10.5 0v3.5h3V0" fill="none" stroke="#404040" stroke-width="1"/><path d="M7 1l3.5 3.5H8.5V7h-3V4.5H3.5z" fill="#404040"/><rect x="1.5" y="8.5" width="11" height="5" rx="2.5" fill="none" stroke="#404040"/></g><g transform="translate(26,710)"><path d="M0 1.5h10" stroke="#404040" stroke-width="2"/><rect x="7.5" y="0.5" width="6" height="13" fill="none" stroke="#404040"/><rect x="8" y="5" width="5" height="4" fill="#4a78b4"/><path d="M7 4.5h7M7 9.5h7" stroke="#404040"/></g><g transform="translate(26,730)"><rect x="0.5" y="0.5" width="6" height="4" rx="2" fill="none" stroke="#404040"/><rect x="7.5" y="3.5" width="6" height="10" fill="none" stroke="#404040"/><rect x="8" y="7" width="5" height="3" fill="#4a78b4"/></g><g transform="translate(26,750)"><rect x="3.5" y="0.5" width="7" height="13" fill="none" stroke="#404040"/><path d="M3 4.5h8M3 9.5h8" stroke="#404040"/><rect x="4" y="5" width="6" height="4" fill="#4a78b4"/></g><path d="M10 137.5h7V130.5z" fill="#404040"/><path d="M26 770.5h14" stroke="#404040"/></svg>
<div class="t" style="left:48.5px;top:151px">cWebButton</div>
<div class="t" style="left:48.5px;top:171px">cWebCheckbox</div>
<div class="t" style="left:48.5px;top:191px">cWebColorForm</div>
<div class="t" style="left:48.5px;top:211px">cWebColorPicker</div>
<div class="t" style="left:48.5px;top:231px">cWebColumn</div>
<div class="t" style="left:48.5px;top:251px">cWebColumnButton</div>
<div class="t" style="left:48.5px;top:271px">cWebColumnCheckbox</div>
<div class="t" style="left:48.5px;top:291px">cWebColumnCombo</div>
<div class="t" style="left:48.5px;top:311px">cWebColumnDate</div>
<div class="t" style="left:48.5px;top:331px">cWebColumnImage</div>
<div class="t" style="left:48.5px;top:351px">cWebColumnLink</div>
<div class="t" style="left:48.5px;top:371px">cWebColumnSuggestion</div>
<div class="t" style="left:48.5px;top:391px">cWebCombo</div>
<div class="t" style="left:48.5px;top:411px">cWebCommandBar</div>
<div class="t" style="left:48.5px;top:431px">cWebDateForm</div>
<div class="t" style="left:48.5px;top:451px">cWebDatePicker</div>
<div class="t" style="left:48.5px;top:471px">cWebEdit</div>
<div class="t" style="left:48.5px;top:491px">cWebFileUploadForm</div>
<div class="t" style="left:48.5px;top:511px">cWebFileUploadButton</div>
<div class="t" style="left:48.5px;top:531px">cWebForm</div>
<div class="t" style="left:48.5px;top:551px">cWebGrid</div>
<div class="t" style="left:48.5px;top:571px">cWebHtmlBox</div>
<div class="t" style="left:48.5px;top:591px">cWebHorizontalLine</div>
<div class="t" style="left:48.5px;top:611px">cWebIFrame</div>
<div class="t" style="left:48.5px;top:631px">cWebImage</div>
<div class="t" style="left:48.5px;top:651px">cWebLabel</div>
<div class="t" style="left:48.5px;top:671px">cWebList</div>
<div class="t" style="left:48.5px;top:691px">cWebListSwipeButton</div>
<div class="t" style="left:48.5px;top:711px">cWebMenuBar</div>
<div class="t" style="left:48.5px;top:731px">cWebMenuButton</div>
<div class="t" style="left:48.5px;top:751px">cWebMenuItem</div>
<div class="t" style="left:25px;top:126px">Web Controls</div>

<!-- left scrollbar -->
<div class="a" style="left:294px;top:121px;width:16px;height:651px;background:#ececf0"></div>
<div class="a" style="left:294px;top:138px;width:15px;height:412px;background:#c6c6ca"></div>
<svg class="a" style="left:294px;top:121px" width="16" height="651"><path d="M4 13l4-4 4 4" fill="none" stroke="#555" stroke-width="2"/><path d="M4 638l4 4 4-4" fill="none" stroke="#555" stroke-width="2"/></svg>
<!-- left tabs -->
<div class="a" style="left:1px;top:773px;width:104px;height:22px;border:1px solid #d8d8de;border-top:none"></div>
<div class="a" style="left:105px;top:773px;width:96px;height:22px;border:1px solid #d8d8de;border-top:none"></div>
<div class="a" style="left:201px;top:772px;width:105px;height:24px;background:#fff;border:1px solid #dcdce4"></div>
<svg class="a" style="left:0;top:772px" width="310" height="24">
<g transform="translate(7,5)"><rect x="5" y="0" width="11" height="10" fill="#424242"/><rect x="2.5" y="2.5" width="11" height="10" fill="#eee" stroke="#424242"/><rect x="0" y="5" width="10" height="10" fill="#424242"/><path d="M1 8h8M1 11h8M3.3 6v9M6.6 6v9" stroke="#eee"/><circle cx="11" cy="10" r="2.5" fill="#eee" stroke="#424242" stroke-width="1.2"/><path d="M12.5 12l2 2" stroke="#424242" stroke-width="1.5"/></g>
<g transform="translate(108,5)"><rect x="0.5" y="0.5" width="13" height="13" fill="#f5ecd8" stroke="#424242"/><rect x="0" y="0" width="14" height="2.5" fill="#424242"/><circle cx="5" cy="6" r="2" fill="#d0a050"/><circle cx="9" cy="10" r="2" fill="#d0a050"/></g>
<g transform="translate(207,5)"><path d="M8 0C3 0 0 3 0 7s3 7 7 7 5-2 4-4-1-3 2-3 1-7-5-7z" fill="#424242"/><circle cx="4" cy="5" r="1" fill="#ddd"/><circle cx="7" cy="3" r="1" fill="#ddd"/><circle cx="3" cy="9" r="1" fill="#ddd"/><circle cx="6" cy="11" r="1" fill="#ddd"/></g>
</svg>

<div class="t" style="left:27px;top:777px;font-size:11.4px">Table Explor...</div>
<div class="t" style="left:126px;top:777px;font-size:11.4px">Code Explor...</div>
<div class="t" style="left:226px;top:777px;font-size:11.4px">Class Palette...</div>
<!-- file navigator -->
<div class="hdr" style="left:0;top:800px;width:310px;height:21px"></div>
<div class="t" style="left:4px;top:804px">File Navigator</div>
<div class="a" style="left:0;top:821px;width:310px;height:236px;background:#fff;border-right:1px solid #8c8c8c"></div>
<div class="t" style="left:27px;top:824px;font-weight:bold">RowLayoutDemo.wo</div>
<svg class="a" style="left:8px;top:823px" width="14" height="16"><path d="M0.5 0.5h7l3 3v11H0.5z" fill="#fff" stroke="#424242" stroke-width="1.1"/><path d="M2.5 6h6M2.5 8.5h6M2.5 11h6M2.5 3.5h3" stroke="#424242"/></svg>


<!-- EDITOR -->
<div class="a" style="left:318px;top:104px;width:137px;height:19px;background:#007acc"></div>
<div class="t" style="left:323px;top:106px;color:#fff;font-size:12.1px">RowLayoutDemo.wo</div>
<div class="a" style="left:316px;top:122px;width:1309px;height:1px;background:#3a6f94"></div>
<div class="a" style="left:316px;top:123px;width:1293px;height:722px;background:#fff"></div>
<div class="a" style="left:316px;top:123px;width:24px;height:722px;background:#dcdcee"></div>
<div class="code" style="left:345px;top:125px">23
24
25
26
27
28
29
30
31
32
33
34
35
36
37
38
39
40
41
42
43
44
45
46
47
48
49
50
51
52
53
54
55</div>
<div class="code" style="left:415px;top:125px"><span class="k">Set</span> piColumnCount <span class="k">to</span> 6

<span class="k">WebSetResponsive</span> piColumnCount rmTabletPortrait <span class="k">to</span> 3

<span class="k">Object</span> oList <span class="k">is</span> <span class="k">a</span> cWebList
    <span class="k">Set</span> pbFillHeight <span class="k">to</span> <span class="k">True</span>
    <span class="k">Set</span> piColumnSpan <span class="k">to</span> 0
    <span class="k">Set</span> piSortColumn <span class="k">to</span> 0

    <span class="k">Object</span> oWebColumn1 <span class="k">is</span> <span class="k">a</span> cWebColumn
        <span class="k">Entry_Item</span> Customer<span class="d">.</span>Name
        <span class="k">Set</span> psCaption <span class="k">to</span> <span class="s">&quot;Customer Name&quot;</span>
        <span class="k">Set</span> piWidth <span class="k">to</span> 50
        <span class="k">Set</span> piListColSpan <span class="k">to</span> 4
    <span class="k">End_Object</span>

    <span class="k">Object</span> oWebColumn6 <span class="k">is</span> <span class="k">a</span> cWebColumn
        <span class="k">Entry_Item</span> Customer<span class="d">.</span>Comments
        <span class="k">Set</span> psCaption <span class="k">to</span> <span class="s">&quot;Comments&quot;</span>
        <span class="k">Set</span> piWidth <span class="k">to</span> 50
        <span class="k">Set</span> piListRowSpan <span class="k">to</span> 2
    <span class="k">End_Object</span>

    <span class="k">Object</span> oWebColumn2 <span class="k">is</span> <span class="k">a</span> cWebColumn
        <span class="k">Entry_Item</span> Customer<span class="d">.</span><span class="k">Address</span>
        <span class="k">Set</span> psCaption <span class="k">to</span> <span class="s">&quot;Address&quot;</span>
        <span class="k">Set</span> piWidth <span class="k">to</span> 50
        <span class="k">Set</span> pbNewLine <span class="k">to</span> <span class="k">True</span>
    <span class="k">End_Object</span>

    <span class="k">Object</span> oWebColumn3 <span class="k">is</span> <span class="k">a</span> cWebColumn
        <span class="k">Entry_Item</span> Customer<span class="d">.</span>City
        <span class="k">Set</span> psCaption <span class="k">to</span> <span class="s">&quot;City&quot;</span></div>

<div class="a" style="left:422px;top:463px;width:617px;height:155px;border:3px solid #e8420c"></div>
<div class="a" style="left:716px;top:563px;width:2px;height:22px;background:#000"></div>
<svg class="a" style="left:712px;top:497px" width="10" height="20"><path d="M3 1.5h1.5M5.5 1.5H7M5 2v13M3 15.5h1.5M5.5 15.5H7" stroke="#000" stroke-width="1" fill="none"/></svg>
<div class="a" style="left:678px;top:589px;width:326px;height:21px;background:rgba(0,0,0,0.18);filter:blur(1.5px)"></div>
<div class="a" style="left:675px;top:586px;width:326px;height:21px;background:#ffffe1;border:1px solid #767676"></div>
<div class="t" style="left:682px;top:590px;font-size:11.9px">Property <b>Integer piListRowSpan</b> // { WebProperty=Client }</div>

<!-- OUTPUT -->
<div class="hdr" style="left:314px;top:867px;width:1312px;height:20px"></div>
<div class="t" style="left:318px;top:871px;font-size:12.5px">Output</div>
<div class="a" style="left:314px;top:913px;width:1313px;height:120px;background:#fff;border:1px solid #8c8c8c"></div>

<!-- RIGHT -->
<div class="hdr" style="left:1632px;top:101px;width:288px;height:20px"></div>
<div class="t" style="left:1636px;top:104px">Workspace Explorer</div>
<div class="hdr" style="left:1632px;top:481px;width:288px;height:20px"></div>
<div class="t" style="left:1636px;top:484px">DDO Explorer [RowLayoutDemo.wo]</div>

<!-- STATUS -->
<div class="a" style="left:0;top:1057px;width:1920px;height:23px;background:#007acc"></div>
<div class="t" style="left:3px;top:1063px;color:#fff;font-size:12.2px">C:\projects\WebListDemo\AppSrc\RowLayoutDemo.wo</div>

<svg class="a" style="left:1790px;top:0" width="130" height="22"><path d="M9 10.5h10" stroke="#000" stroke-width="1"/><rect x="54.5" y="7.5" width="8" height="7" fill="none" stroke="#000"/><path d="M56.5 7.5v-2h8v7h-2" fill="none" stroke="#000"/><path d="M100 5l10 10M110 5l-10 10" stroke="#fff" stroke-width="1.1"/></svg>
<svg class="a" style="left:279px;top:105px" width="30" height="14"><path d="M2 2h6M3 2v5.5M7 2v5.5M1 7.5h8M5 8v4" stroke="#1e1e1e" stroke-width="1.2" fill="none"/><path d="M19.5 2.5l6 6M25.5 2.5l-6 6" stroke="#1e1e1e" stroke-width="1.2"/></svg>
<svg class="a" style="left:279px;top:805px" width="30" height="14"><path d="M2 2h6M3 2v5.5M7 2v5.5M1 7.5h8M5 8v4" stroke="#1e1e1e" stroke-width="1.2" fill="none"/><path d="M19.5 2.5l6 6M25.5 2.5l-6 6" stroke="#1e1e1e" stroke-width="1.2"/></svg>
<svg class="a" style="left:1889px;top:105px" width="30" height="14"><path d="M2 2h6M3 2v5.5M7 2v5.5M1 7.5h8M5 8v4" stroke="#1e1e1e" stroke-width="1.2" fill="none"/><path d="M19.5 2.5l6 6M25.5 2.5l-6 6" stroke="#1e1e1e" stroke-width="1.2"/></svg>
<svg class="a" style="left:1889px;top:485px" width="30" height="14"><path d="M2 2h6M3 2v5.5M7 2v5.5M1 7.5h8M5 8v4" stroke="#1e1e1e" stroke-width="1.2" fill="none"/><path d="M19.5 2.5l6 6M25.5 2.5l-6 6" stroke="#1e1e1e" stroke-width="1.2"/></svg>
<svg class="a" style="left:1596px;top:871px" width="30" height="14"><path d="M2 2h6M3 2v5.5M7 2v5.5M1 7.5h8M5 8v4" stroke="#1e1e1e" stroke-width="1.2" fill="none"/><path d="M19.5 2.5l6 6M25.5 2.5l-6 6" stroke="#1e1e1e" stroke-width="1.2"/></svg>
<svg class="a" style="left:440px;top:105px" width="14" height="16"><path d="M2.5 4.5l7 7M9.5 4.5l-7 7" stroke="#fff" stroke-width="2"/></svg>
<svg class="a" style="left:1568px;top:103px" width="60" height="16"><path d="M10 3L5 8l5 5z" fill="none" stroke="#888"/><path d="M18 3l5 5-5 5z" fill="none" stroke="#888"/><path d="M31 6h8l-4 4z" fill="#555"/><path d="M44 3l10 10M54 3L44 13" stroke="#555" stroke-width="1.5"/></svg>
<div class="a" style="left:1609px;top:124px;width:15px;height:721px;background:#eeeef2"></div>
<div class="a" style="left:1609px;top:124px;width:15px;height:6px;background:#d4d4d8"></div>
<div class="a" style="left:1609px;top:352px;width:15px;height:298px;background:#c8c8cc"></div>
<svg class="a" style="left:1609px;top:124px" width="15" height="721"><path d="M3.5 17l4-4 4 4" fill="none" stroke="#555" stroke-width="2"/><path d="M3.5 709l4 4 4-4" fill="none" stroke="#555" stroke-width="2"/></svg>
<div class="a" style="left:1624px;top:101px;width:7px;height:766px;background:#f4f4f7"></div>
<div class="a" style="left:1631px;top:101px;width:1px;height:932px;background:#7a7a7a"></div>
<div class="a" style="left:316px;top:845px;width:1293px;height:15px;background:#eeeef2"></div>
<div class="a" style="left:316px;top:845px;width:7px;height:15px;background:#d0d0d4"></div>
<div class="a" style="left:340px;top:845px;width:860px;height:15px;background:#c8c8cc"></div>
<svg class="a" style="left:316px;top:845px" width="1300" height="15"><path d="M17 3.5l-4 4 4 4" fill="none" stroke="#555" stroke-width="2"/><path d="M1281 3.5l4 4-4 4" fill="none" stroke="#555" stroke-width="2"/></svg>
<svg class="a" style="left:314px;top:888px" width="200" height="25"><g transform="translate(7,5)"><circle cx="8" cy="8" r="3.2" fill="none" stroke="#424242" stroke-width="1.4"/><path d="M5.5 10.5L3 13.5" stroke="#424242" stroke-width="1.8"/><path d="M0 3l3-3v2h3v2H3v2z" fill="#1e64b4"/></g><g transform="translate(29,5)"><circle cx="8" cy="8" r="3.2" fill="none" stroke="#424242" stroke-width="1.4"/><path d="M5.5 10.5L3 13.5" stroke="#424242" stroke-width="1.8"/><path d="M7 3L4 0v2H0v2h4v2z" fill="#1e64b4"/></g><rect x="48" y="3" width="1" height="19" fill="#ccced6"/><g transform="translate(57,5)"><path d="M4.5 3.5v-3h5l2 2v8h-3" fill="none" stroke="#424242" stroke-width="1.2"/><path d="M0.5 5.5h6l2 2v7h-8z" fill="none" stroke="#424242" stroke-width="1.2"/></g><g transform="translate(78,5)"><path d="M1 1l12 12M13 1L1 13" stroke="#bf3a1c" stroke-width="2.2"/></g><rect x="98" y="3" width="1" height="19" fill="#ccced6"/><g transform="translate(105,5)"><path d="M0.5 11V0.5H10M2.5 13V2.5H12" fill="none" stroke="#424242"/><rect x="4.5" y="4.5" width="9" height="9" fill="#fff" stroke="#424242"/><path d="M9 6.5v5M6.5 9h5" stroke="#1e64b4" stroke-width="1.3"/></g><g transform="translate(128,5)"><path d="M0.5 11V0.5H10M2.5 13V2.5H12" fill="none" stroke="#424242"/><rect x="4.5" y="4.5" width="9" height="9" fill="#fff" stroke="#424242"/><path d="M6.5 9h5" stroke="#1e64b4" stroke-width="1.3"/></g></svg>
<svg class="a" style="left:314px;top:913px" width="400" height="120"><path d="M14.5 1V101M15 83.5H21M15 101.5H21M28.5 1V65M29 11.5H35M29 29.5H35M29 47.5H35M29 65.5H35" stroke="#444" stroke-dasharray="1 1" fill="none"/><path d="M40.5 5.5v11l7-5.5z" fill="none" stroke="#424242" stroke-width="1.1"/><path d="M40.5 23.5v11l7-5.5z" fill="none" stroke="#424242" stroke-width="1.1"/><path d="M40.5 41.5v11l7-5.5z" fill="none" stroke="#424242" stroke-width="1.1"/><path d="M40.5 59.5v11l7-5.5z" fill="none" stroke="#424242" stroke-width="1.1"/><circle cx="29" cy="83" r="7" fill="#424242"/><rect x="25.5" y="79.5" width="7" height="7" fill="#eee"/><circle cx="29" cy="101" r="7" fill="#2a7fcf"/><rect x="28" y="99" width="2" height="6" fill="#fff"/><rect x="28" y="96" width="2" height="2" fill="#fff"/></svg>
<div class="a" style="left:354px;top:1005px;width:212px;height:18px;background:#f0f0f0"></div>
<div class="t" style="left:371px;top:917px;font-size:12px">Total Pages</div><div class="t" style="left:442px;top:917px;font-size:12px">: 0</div>
<div class="t" style="left:371px;top:935px;font-size:12px">Static Data</div><div class="t" style="left:439px;top:935px;font-size:12px">: 331533</div>
<div class="t" style="left:371px;top:953px;font-size:12px">Message area</div><div class="t" style="left:451px;top:953px;font-size:12px">: 205985</div>
<div class="t" style="left:371px;top:971px;font-size:12px">Total Blocks</div><div class="t" style="left:443px;top:971px;font-size:12px">: 13135</div>
<div class="t" style="left:356px;top:989px;font-size:12.6px">----Compile Finished----</div>
<div class="t" style="left:356px;top:1007px;font-size:12.1px">Starting web application: WebListDemo</div>
<div class="a" style="left:1609px;top:914px;width:16px;height:118px;background:#eeeef2"></div>
<div class="a" style="left:1609px;top:997px;width:16px;height:17px;background:#c8c8cc"></div>
<svg class="a" style="left:1609px;top:914px" width="16" height="118"><path d="M4 12l4-4 4 4" fill="none" stroke="#555" stroke-width="2"/><path d="M4 105l4 4 4-4" fill="none" stroke="#555" stroke-width="2"/></svg>
<div class="a" style="left:314px;top:1034px;width:69px;height:22px;background:#f7f7f9"></div>
<div class="a" style="left:535px;top:1037px;width:1px;height:18px;background:#d6d6dc"></div>
<div class="a" style="left:626px;top:1037px;width:1px;height:18px;background:#d6d6dc"></div>
<div class="a" style="left:716px;top:1037px;width:1px;height:18px;background:#d6d6dc"></div>
<div class="a" style="left:921px;top:1037px;width:1px;height:18px;background:#d6d6dc"></div>
<svg class="a" style="left:314px;top:1036px" width="620" height="20"><g transform="translate(6,3)"><path d="M5 3.5V0.5H0.5v13H5" fill="none" stroke="#424242" stroke-width="1.2"/><path d="M3 7h6" stroke="#424242" stroke-width="2"/><path d="M8 3l5 4-5 4z" fill="#424242"/></g><g transform="translate(76,3)"><path d="M0.5 3.5h9v11H0.5z" fill="none" stroke="#424242" stroke-width="1.1"/><path d="M3 2h4v3H3z" fill="none" stroke="#424242"/><path d="M2.5 9l2 3 4-6" stroke="#424242" stroke-width="1.3" fill="none"/></g><g transform="translate(228,3)"><path d="M4 0.5h5l3 3v9.5H7" fill="none" stroke="#424242" stroke-width="1.1"/><circle cx="5" cy="9" r="2.3" fill="none" stroke="#1e64b4" stroke-width="1.2"/><path d="M3 11l-3 3" stroke="#1e64b4" stroke-width="1.5"/></g><g transform="translate(318,2)"><rect x="3.5" y="0.5" width="11" height="11" fill="none" stroke="#424242" stroke-width="1.1"/><rect x="3" y="0" width="12" height="2" fill="#424242"/><circle cx="4.5" cy="10.5" r="4.5" fill="#e01010"/></g><g transform="translate(408,2)"><rect x="0.5" y="0.5" width="15" height="13" fill="none" stroke="#424242" stroke-width="1.1"/><rect x="0" y="0" width="16" height="2" fill="#424242"/><path d="M2 12l3-6 3 6z" fill="#f0c020"/><path d="M9 8l2 3 4-6" stroke="#424242" stroke-width="1.3" fill="none"/></g></svg>
<div class="t" style="left:338px;top:1038px;font-size:11.6px">Output</div>
<div class="t" style="left:407px;top:1038px;font-size:11.6px">To Do List [WebApp.src]</div>
<div class="t" style="left:560px;top:1038px;font-size:11.6px">Find Results</div>
<div class="t" style="left:651px;top:1038px;font-size:11.6px">Breakpoints</div>
<div class="t" style="left:741px;top:1038px;font-size:11.6px">Problem Resolution [WebApp.src]</div>
<div class="t" style="left:1636px;top:131px">Current Project:</div>
<div class="a" style="left:1726px;top:126px;width:193px;height:24px;background:#e5e5e5;border:1px solid #c4c4c4"></div>
<div class="t" style="left:1730px;top:131px">WebApp.src</div>
<svg class="a" style="left:1900px;top:132px" width="16" height="12"><path d="M3 4l5 5 5-5" fill="none" stroke="#555" stroke-width="1.3"/></svg>
<div class="a" style="left:1631px;top:154px;width:289px;height:322px;background:#fff;border:1px solid #7a7a7a"></div>
<div class="a" style="left:1671px;top:157px;width:69px;height:19px;background:#ececec"></div>
<svg class="a" style="left:1631px;top:154px" width="288" height="110"><path d="M28.5 22V83" stroke="#444" stroke-dasharray="1 1"/><rect x="9.5" y="8.5" width="8" height="8" fill="#f4f4f4" stroke="#a0a0a8"/><path d="M11 12.5h5" stroke="#4a4a7a"/><path d="M18 13.5h2" stroke="#444" stroke-dasharray="1 1"/><g transform="translate(21,3)"><rect x="0" y="0" width="16" height="2.5" fill="#424242"/><path d="M15.5 2v12H9M0.5 2v5" fill="none" stroke="#424242"/><circle cx="5" cy="12" r="4.5" fill="#fff" stroke="#424242" stroke-width="1.2"/><path d="M0.5 12h9M5 7.5v9M1.5 9.5h7M1.5 14.5h7" stroke="#424242" stroke-width="0.9"/></g><rect x="24.5" y="26.5" width="8" height="8" fill="#f4f4f4" stroke="#a0a0a8"/><path d="M26 30.5h5" stroke="#4a4a7a"/><path d="M28.5 28v5" stroke="#4a4a7a"/><path d="M33 31.5h2" stroke="#444" stroke-dasharray="1 1"/><rect x="24.5" y="43.5" width="8" height="8" fill="#f4f4f4" stroke="#a0a0a8"/><path d="M26 47.5h5" stroke="#4a4a7a"/><path d="M28.5 45v5" stroke="#4a4a7a"/><path d="M33 48.5h2" stroke="#444" stroke-dasharray="1 1"/><rect x="24.5" y="61.5" width="8" height="8" fill="#f4f4f4" stroke="#a0a0a8"/><path d="M26 65.5h5" stroke="#4a4a7a"/><path d="M28.5 63v5" stroke="#4a4a7a"/><path d="M33 66.5h2" stroke="#444" stroke-dasharray="1 1"/><rect x="24.5" y="79.5" width="8" height="8" fill="#f4f4f4" stroke="#a0a0a8"/><path d="M26 83.5h5" stroke="#4a4a7a"/><path d="M28.5 81v5" stroke="#4a4a7a"/><path d="M33 84.5h2" stroke="#444" stroke-dasharray="1 1"/><g transform="translate(36,22)"><rect x="1" y="0" width="15" height="2.5" fill="#424242"/><path d="M15.5 2v11H10M1.5 2v4" fill="none" stroke="#424242"/><rect x="9" y="5" width="4" height="2" fill="#424242"/><circle cx="5" cy="11" r="4.5" fill="#fff" stroke="#424242" stroke-width="1.2"/><path d="M0.5 11h9M5 6.5v9M1.5 8.5h7M1.5 13.5h7" stroke="#424242" stroke-width="0.9"/></g><g transform="translate(36,40)"><circle cx="12" cy="4" r="3.5" fill="#fff" stroke="#424242"/><path d="M12 2v4" stroke="#424242"/><circle cx="6" cy="10" r="5" fill="#fff" stroke="#424242" stroke-width="1.2"/><path d="M1 10h10M6 5v10M2 7.5h8M2 12.5h8" stroke="#424242" stroke-width="0.9"/></g><g transform="translate(37,58)"><path d="M0.5 1.5h6v12h-6zM8.5 1.5h6v12h-6z" fill="none" stroke="#424242" stroke-width="1.3"/><path d="M6 14h3" stroke="#424242" stroke-width="1.5"/></g><g transform="translate(37,75)"><path d="M4.5 3.5v-3h7l2 2v9" fill="none" stroke="#424242"/><path d="M2.5 5.5v-3h7l2 2v9" fill="none" stroke="#424242"/><rect x="0.5" y="5.5" width="9" height="10" fill="#fff" stroke="#424242" stroke-width="1.1"/><path d="M2.5 8.5h5M2.5 10.5h5M2.5 12.5h5" stroke="#424242"/></g></svg>
<div class="t" style="left:1674px;top:158px">WebApp.src</div>
<div class="t" style="left:1688px;top:176px;font-size:12px">Web Views (7)</div>
<div class="t" style="left:1688px;top:194px;font-size:12px">Web Components (2)</div>
<div class="t" style="left:1688px;top:212px;font-size:12px">Data Dictionaries (1)</div>
<div class="t" style="left:1688px;top:230px;font-size:12px">Other Files (9)</div>
<svg class="a" style="left:1631px;top:501px" width="288" height="30"><g transform="translate(6,6)"><path d="M0.5 3v11h6M4.5 5.5h6v9h-6zM10.5 5.5h5v9h-5" fill="none" stroke="#424242" stroke-width="1.2"/><path d="M3 0v6M0 3h6" stroke="#2a9a2a" stroke-width="1.6"/></g><g transform="translate(28,6)" opacity="0.6"><rect x="0" y="7" width="6" height="7" rx="1.5" fill="#424242"/><path d="M8.5 0.5h3v4h-3zM12.5 0.5h3v4h-3z" fill="none" stroke="#424242"/><path d="M2 5V2h3M14 8v4h-3" fill="none" stroke="#424242"/></g><g transform="translate(49,6)" opacity="0.7"><path d="M3.5 0.5h6v9h-6zM9.5 0.5h5v9h-5" fill="none" stroke="#424242" stroke-width="1.1"/><circle cx="4" cy="11" r="3.5" fill="#424242"/></g><rect x="70" y="3" width="1" height="22" fill="#ccced6"/><g transform="translate(78,6)" opacity="0.65"><path d="M0.5 3.5h6v11h-6zM6.5 3.5h6v11h-6" fill="none" stroke="#424242" stroke-width="1.1"/><path d="M0 1h6" stroke="#424242" stroke-width="1.4"/></g><g transform="translate(100,6)"><path d="M0 0l4 4M4 0L0 4" stroke="#c02020" stroke-width="1.3"/><rect x="5.5" y="1.5" width="5" height="3" fill="none" stroke="#424242" stroke-width="1.2"/><path d="M8 4.5v3M3 7.5h10M3 7.5v2M13 7.5v2" fill="none" stroke="#424242"/><rect x="0.5" y="9.5" width="5" height="4" fill="none" stroke="#424242" stroke-width="1.2"/><rect x="9.5" y="9.5" width="5" height="4" fill="none" stroke="#424242" stroke-width="1.2"/></g><rect x="121" y="3" width="1" height="22" fill="#ccced6"/><g transform="translate(128,6)" opacity="0.65"><path d="M3 0v5M0.5 2.5h5" stroke="#424242" stroke-width="1.2"/><rect x="7.5" y="0.5" width="7" height="4" fill="none" stroke="#424242"/><path d="M11 4.5v3M3 7.5h8" fill="none" stroke="#424242"/><rect x="0.5" y="8.5" width="7" height="5" fill="none" stroke="#424242"/></g><g transform="translate(150,6)" opacity="0.65"><path d="M0.5 2.5h5" stroke="#424242" stroke-width="1.2"/><rect x="7.5" y="0.5" width="7" height="4" fill="none" stroke="#424242"/><path d="M11 4.5v3M3 7.5h8" fill="none" stroke="#424242"/><rect x="0.5" y="8.5" width="7" height="5" fill="none" stroke="#424242"/></g></svg>
<div class="a" style="left:1631px;top:532px;width:286px;height:501px;background:#fff;border:1px solid #7a7a7a"></div>
<svg class="a" style="left:1631px;top:532px" width="288" height="60"><path d="M13.5 17V47" stroke="#444" stroke-dasharray="1 1"/><path d="M28.5 17V28H35" stroke="#444" stroke-dasharray="1 1" fill="none"/><rect x="9.5" y="7.5" width="8" height="8" fill="#f4f4f4" stroke="#a0a0a8"/><path d="M11 11.5h5" stroke="#4a4a7a"/><path d="M18 12.5h2" stroke="#444" stroke-dasharray="1 1"/><rect x="9.5" y="42.5" width="8" height="8" fill="#f4f4f4" stroke="#a0a0a8"/><path d="M11 46.5h5" stroke="#4a4a7a"/><path d="M13.5 44v5" stroke="#4a4a7a"/><path d="M18 47.5h2" stroke="#444" stroke-dasharray="1 1"/><g transform="translate(22,4)"><rect x="5.5" y="0.5" width="5" height="4" fill="none" stroke="#424242" stroke-width="1.2"/><path d="M8 4.5v3M3 7.5h10M3 7.5v2M13 7.5v2" fill="none" stroke="#424242" stroke-width="1.1"/><rect x="0.5" y="9.5" width="5" height="4" fill="none" stroke="#424242" stroke-width="1.2"/><rect x="10.5" y="9.5" width="5" height="4" fill="none" stroke="#424242" stroke-width="1.2"/></g><g transform="translate(22,39)"><rect x="5.5" y="0.5" width="5" height="4" fill="none" stroke="#424242" stroke-width="1.2"/><path d="M8 4.5v3M3 7.5h10M3 7.5v2M13 7.5v2" fill="none" stroke="#424242" stroke-width="1.1"/><rect x="0.5" y="9.5" width="5" height="4" fill="none" stroke="#424242" stroke-width="1.2"/><rect x="10.5" y="9.5" width="5" height="4" fill="none" stroke="#424242" stroke-width="1.2"/></g><g transform="translate(36,20)"><path d="M3.5 0.5h6v10h-6zM9.5 0.5h5v9h-5" fill="#fff" stroke="#424242" stroke-width="1.1"/><circle cx="4" cy="11" r="4" fill="#333"/><path d="M2 13v-3.5h4V13M4 9.5V13" stroke="#fff" stroke-width="0.9" fill="none"/></g></svg>
<div class="t" style="left:1674px;top:535px;font-weight:bold;font-size:11.8px">DDOs for oRowLayoutDemo</div>
<div class="t" style="left:1688px;top:553px;font-size:12px">cCustomerDataDictionary [Main DDO]</div>
<div class="t" style="left:1674px;top:571px;font-weight:bold;font-size:11.7px">DDO Column Selector</div>
<div class="a" style="left:1633px;top:1034px;width:132px;height:22px;background:#e8e8ec;border:1px solid #d8d8de;border-top:none"></div>
<div class="a" style="left:1765px;top:1034px;width:151px;height:23px;background:#fbfbfc"></div>
<svg class="a" style="left:1636px;top:1036px" width="160" height="20"><g transform="translate(3,2)"><rect x="3.5" y="0.5" width="10" height="13" fill="none" stroke="#424242" stroke-width="1.1"/><path d="M5 3h7M5 5.5h7M5 8h7M5 10.5h7" stroke="#424242" stroke-width="1.1"/><path d="M2 8v7" stroke="#424242" stroke-width="3"/></g><g transform="translate(134,2)"><rect x="7" y="0" width="7" height="9" rx="2" fill="#424242"/><path d="M4 8v3M1 11h6M1 11v2M7 11v2" stroke="#424242" stroke-width="1.2" fill="none"/><rect x="3" y="6" width="3" height="2.5" fill="#424242"/><rect x="0" y="12" width="3" height="2.5" fill="#424242"/><rect x="6" y="12" width="3" height="2.5" fill="#424242"/></g></svg>
<div class="t" style="left:1657px;top:1038px">Properties (Inactive)</div>
<div class="t" style="left:1788px;top:1038px">DDO Explorer [RowLa...</div>
<div class="a" style="left:0;top:1077px;width:1920px;height:3px;background:#1c4f7c"></div>
<div class="t" style="left:1537px;top:1063px;color:#fff">Ln 43</div>
<div class="t" style="left:1578px;top:1063px;color:#fff">Col 35</div>
<svg class="a" style="left:1759px;top:1060px" width="17" height="17"><circle cx="8" cy="8" r="6.5" fill="none" stroke="#d8d8d8" stroke-width="2"/><path d="M3.5 3.5l9 9" stroke="#d8d8d8" stroke-width="2"/></svg>
<div class="t" style="left:1793px;top:1063px;color:#fff">INS</div>
<div class="t" style="left:1838px;top:1063px;color:#62baff">CAPS</div>
<div class="t" style="left:1882px;top:1063px;color:#62baff">NUM</div>

</body></html>
